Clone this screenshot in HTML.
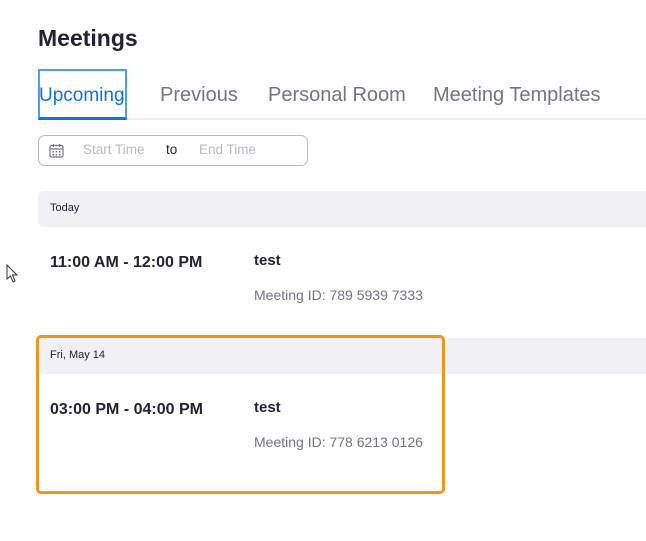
<!DOCTYPE html>
<html><head><meta charset="utf-8"><style>
*{margin:0;padding:0;box-sizing:border-box}
body{width:646px;height:541px;background:#fff;position:relative;overflow:hidden;font-family:"Liberation Sans",sans-serif;color:#232333}
.a{position:absolute;white-space:nowrap}
.tab{font-size:20px;color:#747487;top:84px}
.row{position:absolute;left:38px;right:0;background:#f1f1f5;border-radius:6px 0 0 6px}
.time{font-size:16px;font-weight:bold}
.ttl{font-size:15px;font-weight:bold}
.mid{font-size:14px;color:#747487}
</style></head><body>
<div class="a" style="left:38px;top:25px;font-size:23px;font-weight:bold;color:#232333">Meetings</div>
<div class="a" style="left:38px;top:118px;width:608px;height:2px;background:#ededf4"></div>
<div class="a" style="left:38px;top:69px;width:89px;height:51px;border:2px solid #4a9bff;border-bottom:3px solid #0e72ed"></div>
<div class="a tab" style="left:39px;color:#0e72ed;font-size:19px;top:85px">Upcoming</div>
<div class="a tab" style="left:160px">Previous</div>
<div class="a tab" style="left:268px">Personal Room</div>
<div class="a tab" style="left:433px">Meeting Templates</div>
<div class="a" style="left:38px;top:135px;width:270px;height:31px;border:1px solid #bababa;border-radius:7px"></div>
<svg class="a" style="left:49px;top:143px" width="15" height="15" viewBox="0 0 15 15" fill="none" stroke="#747487" stroke-width="1.2"><rect x="1" y="2.5" width="13" height="11.5" rx="1.5"/><line x1="1" y1="6" x2="14" y2="6"/><line x1="4.5" y1="1" x2="4.5" y2="4"/><line x1="10.5" y1="1" x2="10.5" y2="4"/><g fill="#747487" stroke="none"><rect x="3.5" y="8" width="1.5" height="1.5"/><rect x="6.7" y="8" width="1.5" height="1.5"/><rect x="10" y="8" width="1.5" height="1.5"/><rect x="3.5" y="11" width="1.5" height="1.5"/><rect x="6.7" y="11" width="1.5" height="1.5"/><rect x="10" y="11" width="1.5" height="1.5"/></g></svg>
<div class="a" style="left:83px;top:142px;font-size:13.5px;color:#b9b9c4">Start Time</div>
<div class="a" style="left:166px;top:142px;font-size:13.5px;color:#232333">to</div>
<div class="a" style="left:199px;top:142px;font-size:13.5px;color:#b9b9c4">End Time</div>
<div class="row" style="top:191px;height:36px"></div>
<div class="a" style="left:50px;top:202px;font-size:11px">Today</div>
<div class="a time" style="left:50px;top:254px">11:00 AM - 12:00 PM</div>
<div class="a ttl" style="left:254px;top:252px">test</div>
<div class="a mid" style="left:254px;top:287px">Meeting ID: 789 5939 7333</div>
<div class="row" style="top:338px;height:36px"></div>
<div class="a" style="left:50px;top:349px;font-size:11px">Fri, May 14</div>
<div class="a time" style="left:50px;top:401px">03:00 PM - 04:00 PM</div>
<div class="a ttl" style="left:254px;top:399px">test</div>
<div class="a mid" style="left:254px;top:434px">Meeting ID: 778 6213 0126</div>
<div class="a" style="left:36px;top:335px;width:409px;height:159px;border:3px solid #f0961e;border-radius:5px"></div>
<svg class="a" style="left:6px;top:264px" width="14" height="20" viewBox="0 0 14 20"><path d="M1 1 L1 15 L4.5 12 L7 18 L9 17 L6.5 11 L11 11 Z" fill="#fff" stroke="#333" stroke-width="1"/></svg>
</body></html>
